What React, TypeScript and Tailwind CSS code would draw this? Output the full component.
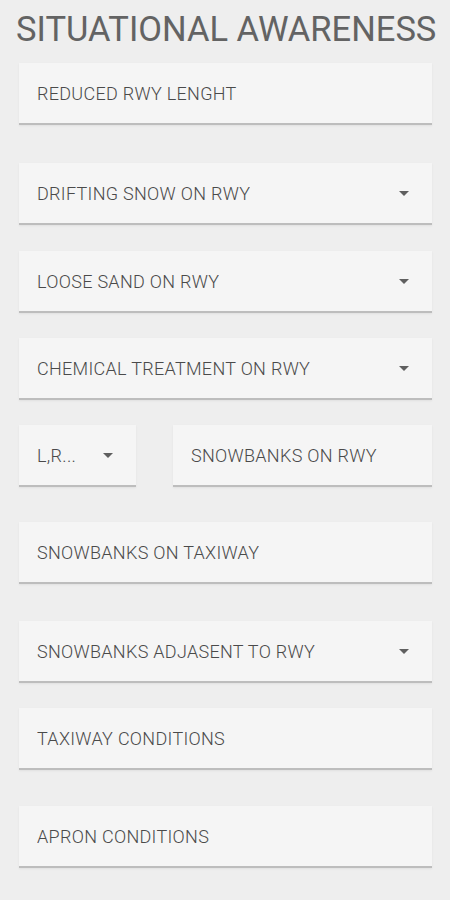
import React from 'react';

interface FieldProps {
  label: string;
  dropdown?: boolean;
  className?: string;
}

const Arrow: React.FC = () => (
  <svg width="10" height="5" viewBox="0 0 10 5" className="shrink-0">
    <path d="M0 0 L10 0 L5 5 Z" fill="#5f5f5f" />
  </svg>
);

const Field: React.FC<FieldProps> = ({ label, dropdown, className }) => (
  <div
    className={`flex h-[62px] items-center justify-between bg-[#f5f5f5] border-b-2 border-[#bdbdbd] pl-[18px] pr-[23px] shadow-[0_1px_2px_rgba(0,0,0,0.06)] ${className ?? ''}`}
  >
    <span className="text-[18px] font-light tracking-[0.3px] text-[#4a4a4a] truncate">{label}</span>
    {dropdown && <Arrow />}
  </div>
);

const App: React.FC = () => {
  return (
    <div className="min-h-[900px] w-[450px] bg-[#eeeeee] font-['Roboto',sans-serif] overflow-hidden">
      <h1 className="pl-[16px] pt-[12px] text-[34.5px] leading-[35px] text-[#636363] whitespace-nowrap">
        SITUATIONAL AWARENESS
      </h1>
      <div className="flex flex-col pr-[18px] pl-[19px]">
        <Field label="REDUCED RWY LENGHT" className="mt-[16px]" />
        <Field label="DRIFTING SNOW ON RWY" dropdown className="mt-[38px]" />
        <Field label="LOOSE SAND ON RWY" dropdown className="mt-[26px]" />
        <Field label="CHEMICAL TREATMENT ON RWY" dropdown className="mt-[25px]" />
        <div className="mt-[25px] flex gap-[37px]">
          <Field label="L,R..." dropdown className="w-[117px] pr-[23px]" />
          <Field label="SNOWBANKS ON RWY" className="flex-1" />
        </div>
        <Field label="SNOWBANKS ON TAXIWAY" className="mt-[35px]" />
        <Field label="SNOWBANKS ADJASENT TO RWY" dropdown className="mt-[37px]" />
        <Field label="TAXIWAY CONDITIONS" className="mt-[25px]" />
        <Field label="APRON CONDITIONS" className="mt-[36px]" />
      </div>
    </div>
  );
};

export default App;
